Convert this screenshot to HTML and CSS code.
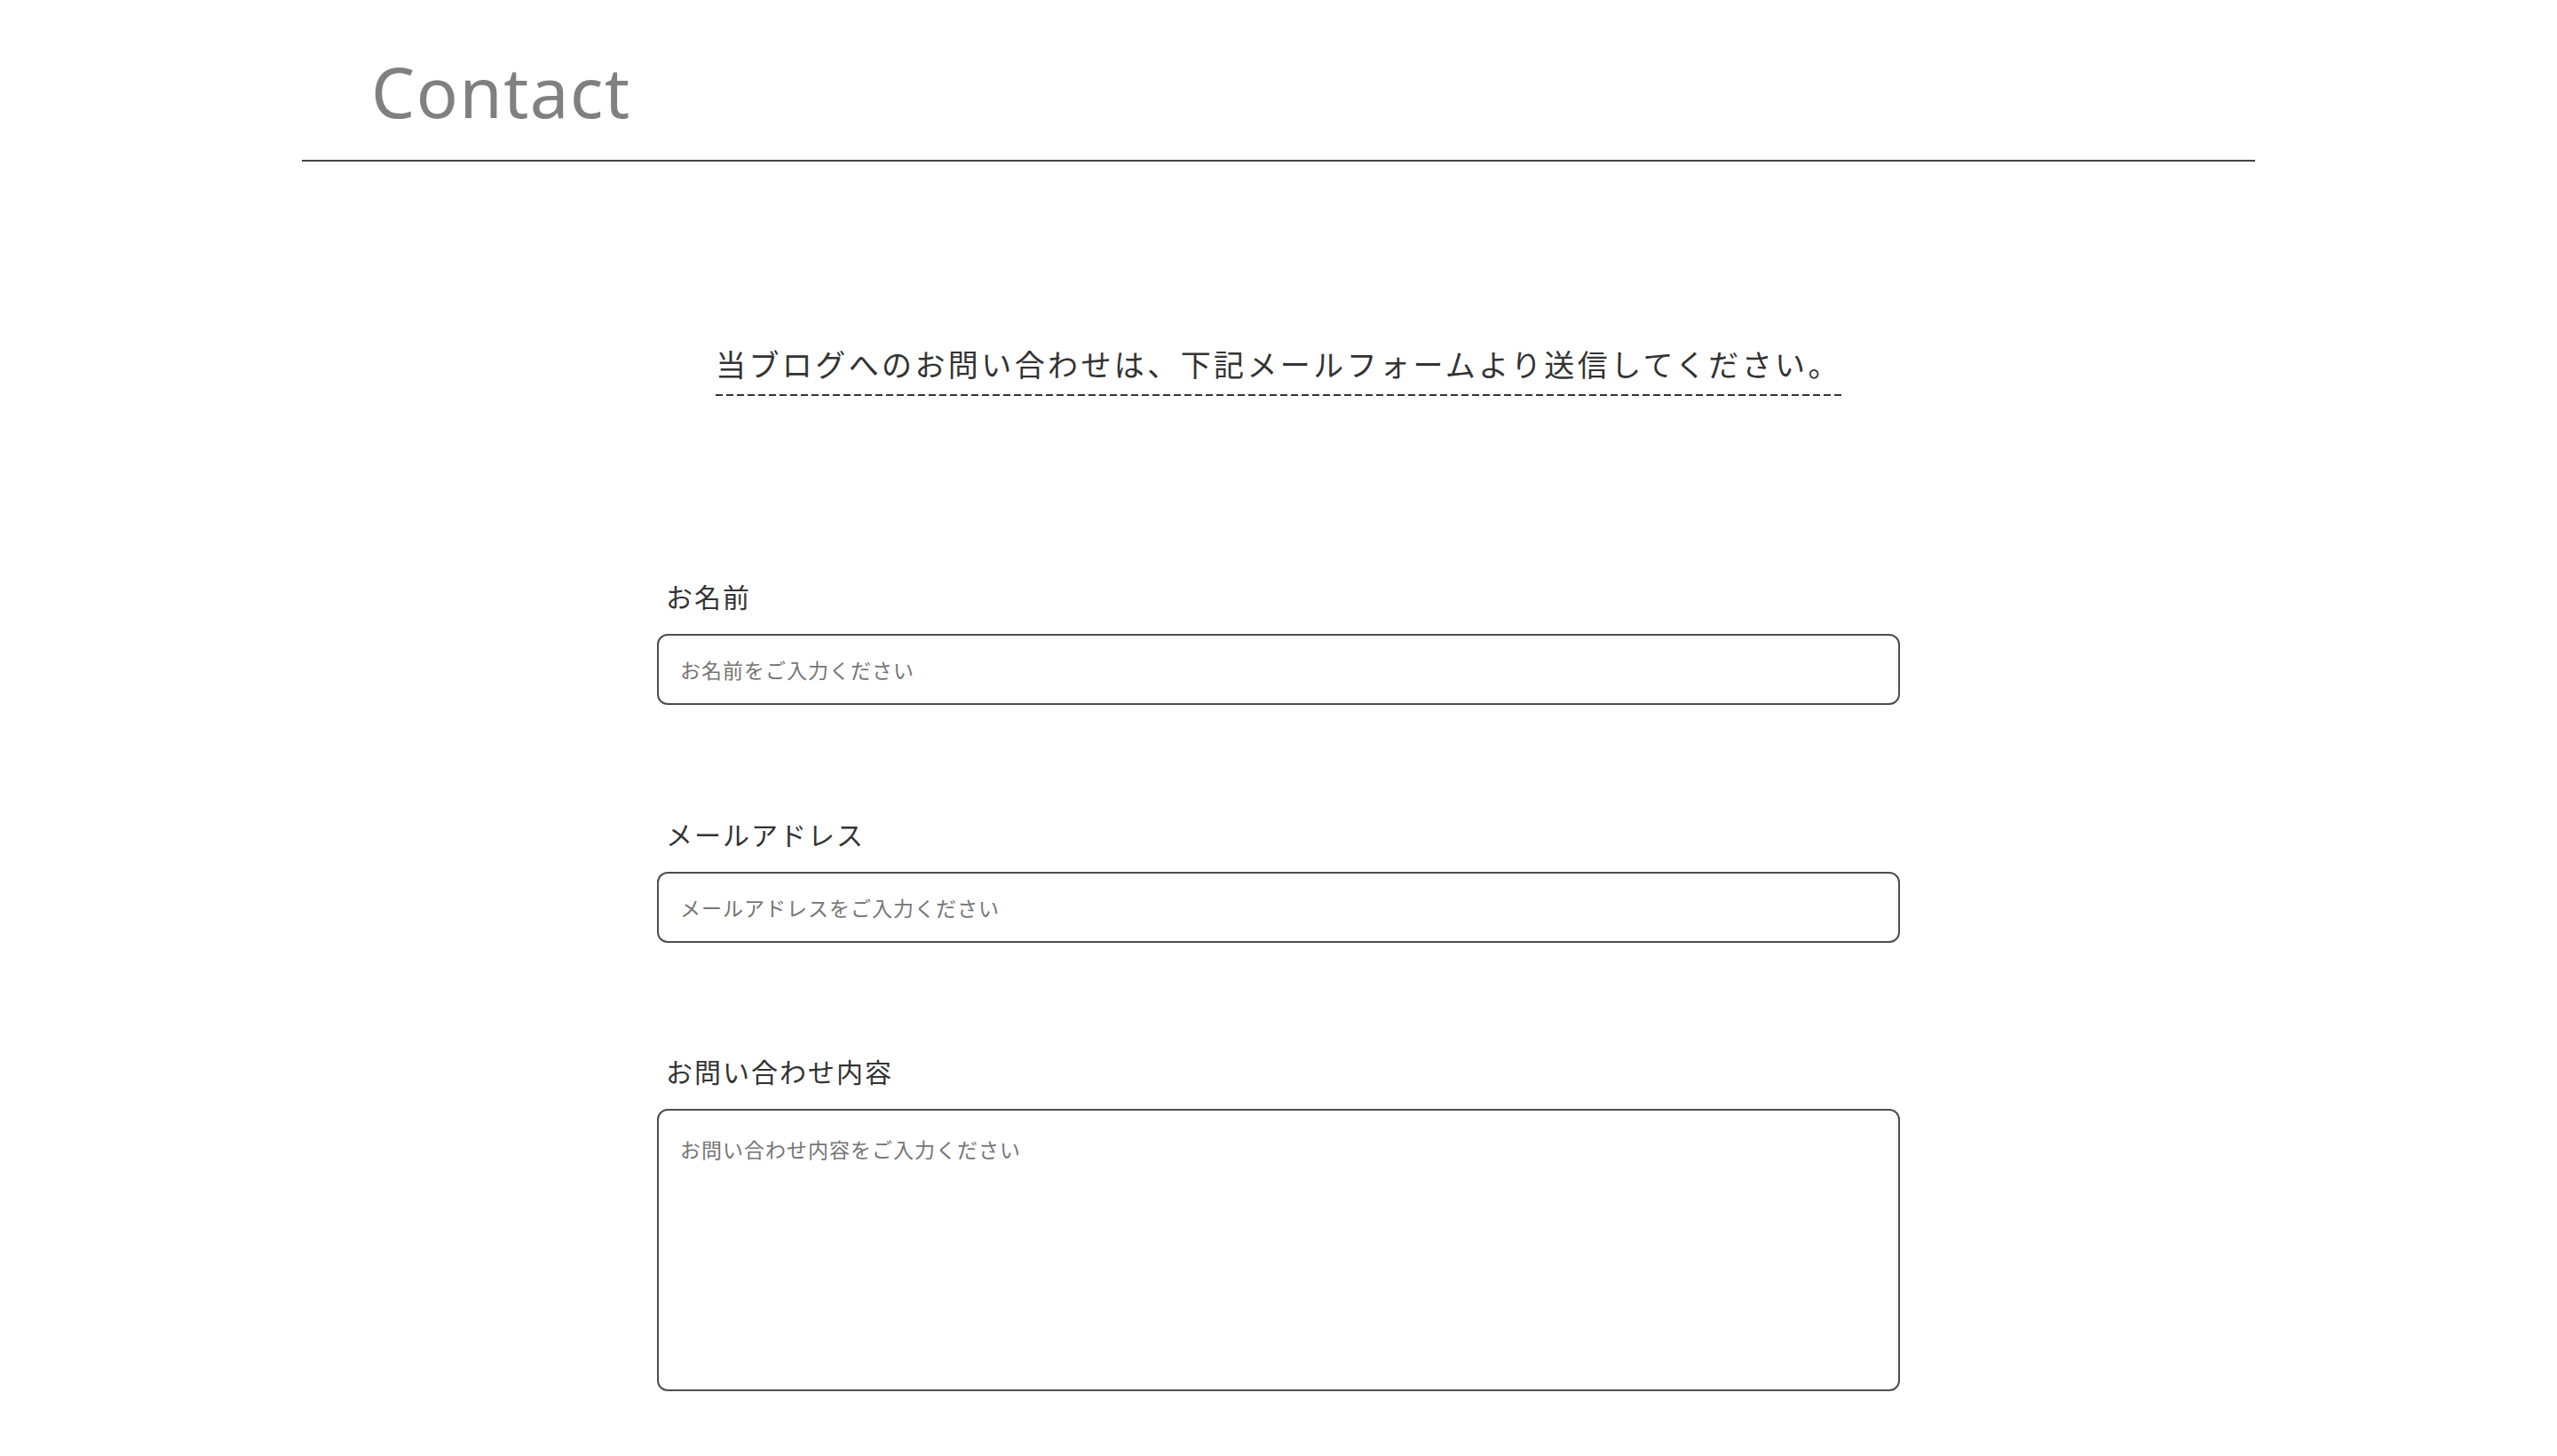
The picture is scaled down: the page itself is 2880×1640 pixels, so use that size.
FILE: index.html
```html
<!DOCTYPE html>
<html lang="ja">
<head>
<meta charset="utf-8">
<title>Contact</title>
<link rel="stylesheet" href="styles.css">
</head>
<body>
<header class="site-header">
  <h1 class="site-title">Contact</h1>
</header>
<main class="page">
  <div class="intro">
    <p class="intro-text">当ブログへのお問い合わせは、下記メールフォームより送信してください。</p>
  </div>
  <form class="contact-form">
    <div class="field">
      <label class="field-label" for="name">お名前</label>
      <input class="field-input" id="name" type="text" placeholder="お名前をご入力ください">
    </div>
    <div class="field">
      <label class="field-label" for="email">メールアドレス</label>
      <input class="field-input" id="email" type="email" placeholder="メールアドレスをご入力ください">
    </div>
    <div class="field">
      <label class="field-label" for="message">お問い合わせ内容</label>
      <textarea class="field-input field-textarea" id="message" placeholder="お問い合わせ内容をご入力ください"></textarea>
    </div>
  </form>
</main>
</body>
</html>
```
FILE: styles.css
```css
html, body {
  margin: 0;
  padding: 0;
  background: #ffffff;
}

body {
  font-family: "Noto Sans CJK JP", "Noto Sans", sans-serif;
  color: #333333;
}

.site-header {
  width: 2200px;
  margin: 0 auto;
  padding-top: 64px;
  padding-bottom: 38px;
  border-bottom: 2px solid #444444;
}

.site-title {
  margin: 0;
  padding-left: 78px;
  font-family: "Noto Sans", "Open Sans", sans-serif;
  font-weight: 400;
  font-size: 78px;
  line-height: 78px;
  letter-spacing: 1.5px;
  color: #808080;
}

.intro {
  display: flex;
  justify-content: center;
  margin-top: 202px;
}

.intro-text {
  margin: 0;
  font-size: 34px;
  letter-spacing: 0.1em;
  line-height: 51px;
  padding-bottom: 11px;
  color: #333333;
  background: repeating-linear-gradient(to right, #333333 0 8px, transparent 8px 12px) left bottom / 100% 2px no-repeat;
}

.contact-form {
  width: 1400px;
  margin: 203px auto 0;
  padding-bottom: 120px;
}

.field {
  margin-bottom: 122.5px;
}

.field-label {
  display: block;
  padding-left: 10px;
  margin-bottom: 21px;
  font-size: 30px;
  letter-spacing: 2px;
  line-height: 44px;
  color: #333333;
}

.field-input {
  display: block;
  box-sizing: border-box;
  width: 100%;
  height: 80px;
  margin: 0;
  padding: 0 24px;
  border: 2px solid #4d4d4d;
  border-radius: 12px;
  background: #ffffff;
  font-family: "Noto Sans CJK JP", "Noto Sans", sans-serif;
  font-size: 23px;
  letter-spacing: 1px;
  color: #333333;
  outline: none;
}

.field-input::placeholder {
  color: #757575;
  opacity: 1;
}

.field-textarea {
  height: 318px;
  padding: 26px 24px;
  line-height: 1.5;
  resize: none;
}
```
